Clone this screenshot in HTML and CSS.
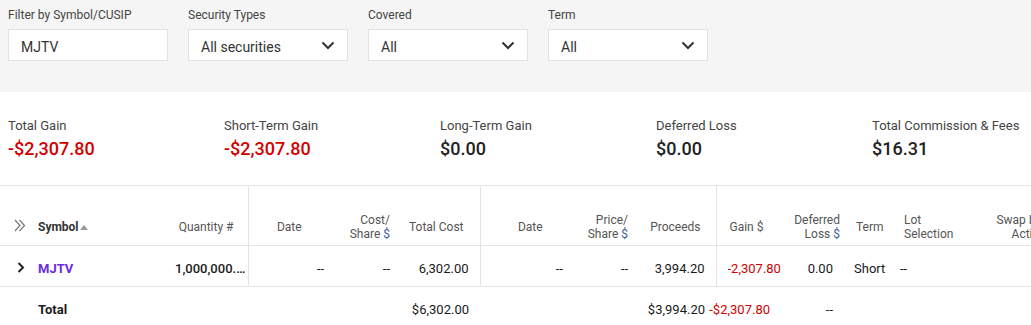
FILE: index.html
```html
<!DOCTYPE html>
<html lang="en">
<head>
  <meta charset="UTF-8">
  <title>Gains &amp; Losses</title>
  <link rel="stylesheet" href="styles.css">
</head>
<body>

  <div class="filters">
    <div class="field">
      <label>Filter by Symbol/CUSIP</label>
      <div class="box">MJTV</div>
    </div>
    <div class="field">
      <label>Security Types</label>
      <div class="box select">All securities
        <svg class="chev" width="14" height="9" viewBox="0 0 14 9"><path d="M1.5 1.5 L7 7 L12.5 1.5" fill="none" stroke="#333" stroke-width="2"/></svg>
      </div>
    </div>
    <div class="field">
      <label>Covered</label>
      <div class="box select">All
        <svg class="chev" width="14" height="9" viewBox="0 0 14 9"><path d="M1.5 1.5 L7 7 L12.5 1.5" fill="none" stroke="#333" stroke-width="2"/></svg>
      </div>
    </div>
    <div class="field">
      <label>Term</label>
      <div class="box select">All
        <svg class="chev" width="14" height="9" viewBox="0 0 14 9"><path d="M1.5 1.5 L7 7 L12.5 1.5" fill="none" stroke="#333" stroke-width="2"/></svg>
      </div>
    </div>
  </div>

  <div class="summary">
    <div class="stat">
      <div class="stat-label">Total Gain</div>
      <div class="stat-value neg">-$2,307.80</div>
    </div>
    <div class="stat">
      <div class="stat-label">Short-Term Gain</div>
      <div class="stat-value neg">-$2,307.80</div>
    </div>
    <div class="stat">
      <div class="stat-label">Long-Term Gain</div>
      <div class="stat-value">$0.00</div>
    </div>
    <div class="stat">
      <div class="stat-label">Deferred Loss</div>
      <div class="stat-value">$0.00</div>
    </div>
    <div class="stat">
      <div class="stat-label">Total Commission &amp; Fees</div>
      <div class="stat-value">$16.31</div>
    </div>
  </div>

  <div class="table-wrap">
  <table class="lots">
    <colgroup>
      <col style="width:30px"><col style="width:120px"><col style="width:98px">
      <col style="width:82px"><col style="width:68px"><col style="width:82px">
      <col style="width:100px"><col style="width:56px"><col style="width:80px">
      <col style="width:66px"><col style="width:64px"><col style="width:50px">
      <col style="width:84px"><col style="width:100px">
    </colgroup>
    <thead>
      <tr>
        <th class="expand">
          <svg width="12" height="13" viewBox="0 0 12 13"><path d="M1 1 L6 6.5 L1 12 M5.5 1 L10.5 6.5 L5.5 12" fill="none" stroke="#777" stroke-width="1.2"/></svg>
        </th>
        <th class="left sym">Symbol<span class="sort"></span></th>
        <th class="qty sep">Quantity #</th>
        <th class="center">Date</th>
        <th class="cps">Cost/<br>Share <span class="cur">$</span></th>
        <th class="tc sep">Total Cost</th>
        <th class="center">Date</th>
        <th class="pps">Price/<br>Share <span class="cur">$</span></th>
        <th class="proc sep">Proceeds</th>
        <th class="left gain">Gain $</th>
        <th class="dl">Deferred<br>Loss <span class="cur">$</span></th>
        <th class="left term">Term</th>
        <th class="left lot">Lot<br>Selection</th>
        <th class="swap">Swap Lot<br>Action</th>
      </tr>
    </thead>
    <tbody>
      <tr class="row">
        <td class="expand">
          <svg width="8" height="11" viewBox="0 0 8 11"><path d="M1.5 1 L6 5.5 L1.5 10" fill="none" stroke="#222" stroke-width="2"/></svg>
        </td>
        <td class="left sym"><span class="ticker">MJTV</span></td>
        <td class="qty-val sep"><div class="clip">1,000,000.0000</div></td>
        <td class="d1">--</td>
        <td class="cps">--</td>
        <td class="tcv sep">6,302.00</td>
        <td class="d2">--</td>
        <td class="pps">--</td>
        <td class="procv sep">3,994.20</td>
        <td class="gainv"><div class="clip neg">-2,307.80</div></td>
        <td class="dlv">0.00</td>
        <td class="left termv">Short</td>
        <td class="left lotv">--</td>
        <td></td>
      </tr>
      <tr class="total">
        <td></td>
        <td class="left sym"><b>Total</b></td>
        <td></td>
        <td></td>
        <td></td>
        <td class="tcv">$6,302.00</td>
        <td></td>
        <td></td>
        <td class="procv">$3,994.20</td>
        <td class="gaint"><div class="push"><span class="neg">-$2,307.80</span></div></td>
        <td class="dlv">--</td>
        <td></td>
        <td></td>
        <td></td>
      </tr>
    </tbody>
  </table>
  </div>

</body>
</html>
```

FILE: styles.css
```css
body {
  margin: 0;
  font-family: Roboto, "Liberation Sans", sans-serif;
  color: #222;
  background: #fff;
  overflow: hidden;
}
.filters {
  background-color: #f5f5f5;
  height: 92px;
  box-sizing: border-box;
  padding: 8px 8px 0;
  display: flex;
  gap: 20px;
}
.field label {
  display: block;
  font-size: 12px;
  line-height: 14px;
  color: #444;
  margin-bottom: 7px;
}
.box {
  width: 160px;
  height: 32px;
  box-sizing: border-box;
  border: 1px solid #e2e2e2;
  background: #fff;
  font-size: 14px;
  color: #333;
  padding: 3px 12px 0;
  display: flex;
  align-items: center;
}
.select {
  justify-content: space-between;
}
.chev {
  margin-top: -3px;
}
.summary {
  display: flex;
  padding: 26px 8px 0;
  height: 94px;
  box-sizing: border-box;
  border-bottom: 1px solid #e6e6e6;
}
.stat {
  width: 216px;
  flex-shrink: 0;
}
.stat-label {
  font-size: 13px;
  line-height: 16px;
  color: #444;
  margin-bottom: 4px;
}
.stat-value {
  font-size: 18px;
  line-height: 22px;
  font-weight: 500;
  color: #222;
}
.neg {
  color: #d20000;
}
.table-wrap {
  width: 100%;
  overflow: hidden;
}
.lots {
  table-layout: fixed;
  border-collapse: collapse;
  width: 1080px;
}
.lots th {
  height: 37px;
  font-size: 12px;
  line-height: 14px;
  font-weight: 400;
  color: #555;
  text-align: right;
  vertical-align: middle;
  padding: 22px 0 0;
  border-bottom: 1px solid #e3e3e3;
  white-space: nowrap;
}
.lots td {
  font-size: 13px;
  color: #1a1a1a;
  text-align: right;
  white-space: nowrap;
  padding: 0;
}
.row td {
  height: 36px;
  border-bottom: 1px solid #e3e3e3;
  padding-top: 4px;
}
.total td {
  height: 44px;
}
.sep {
  border-right: 1px solid #e3e3e3;
}
.lots .left {
  text-align: left;
}
.lots .center {
  text-align: center;
}
.expand {
  text-align: left !important;
  padding-left: 14px !important;
}
.row .expand {
  padding-left: 17px !important;
}
.sym {
  padding-left: 8px !important;
}
th.sym {
  font-weight: 700;
  color: #333;
}
.sort {
  display: inline-block;
  width: 0;
  height: 0;
  border-left: 4px solid transparent;
  border-right: 4px solid transparent;
  border-bottom: 5px solid #999;
  margin-left: 1px;
  vertical-align: 1px;
}
.ticker {
  color: #6b2be0;
  font-weight: 700;
  font-size: 13px;
}
.cur {
  color: #3a5aa8;
}
.qty { padding-right: 14px !important; }
.qty-val { padding-left: 25px !important; text-align: left !important; }
.clip {
  overflow: hidden;
  text-overflow: ellipsis;
  white-space: nowrap;
}
.qty-val .clip { font-weight: 500; }
.d1 { padding-right: 6px !important; }
.cps { padding-right: 8px !important; }
.tc { padding-right: 16px !important; }
.tcv { padding-right: 11px !important; }
.d2 { padding-right: 17px !important; }
.pps { padding-right: 8px !important; }
.proc { padding-right: 15px !important; }
.procv { padding-right: 11px !important; }
.gain { padding-left: 13px !important; }
.gainv { padding-left: 11px !important; text-align: left !important; }
.gainv .clip { text-overflow: clip; }
.gaint { padding-right: 12px !important; }
.push {
  display: flex;
  justify-content: flex-end;
  white-space: nowrap;
}
.dl { padding-right: 6px !important; }
.dlv { padding-right: 13px !important; }
.term { padding-left: 10px !important; }
.termv { padding-left: 8px !important; }
.lot { padding-left: 8px !important; }
.lotv { padding-left: 4px !important; }
.swap { padding-right: 34px !important; }
```
